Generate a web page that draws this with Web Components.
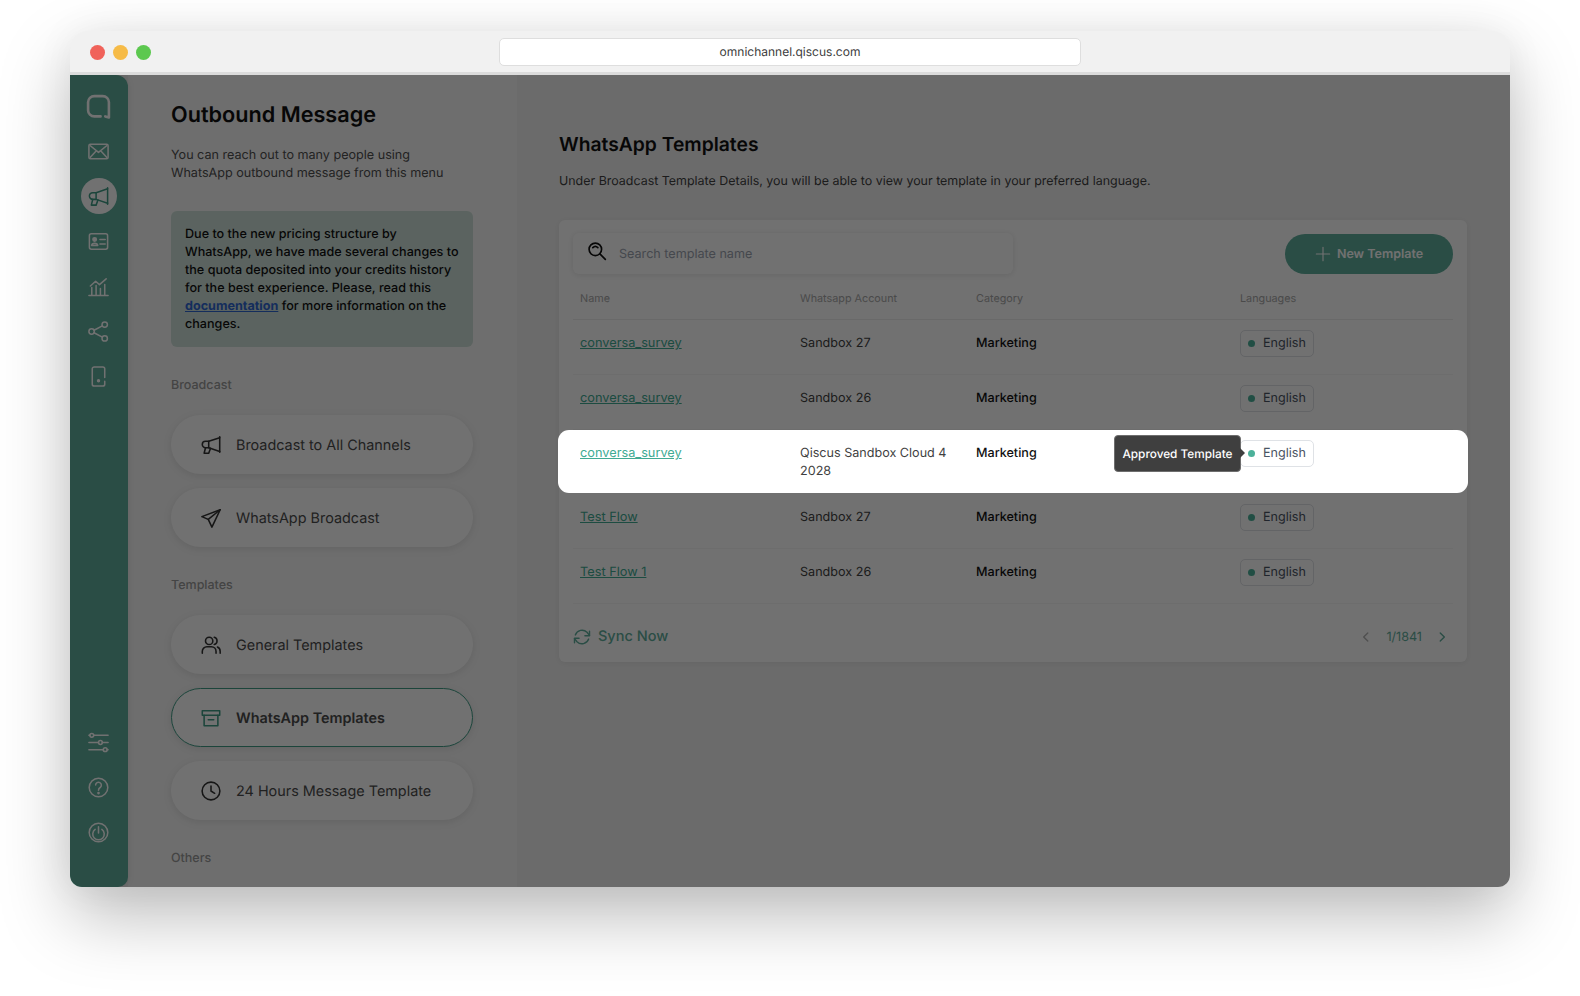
<!DOCTYPE html>
<html>
<head>
<meta charset="utf-8">
<title>Outbound Message</title>
<style>
  html, body { margin: 0; height: 100%; background: #fff; }
  body { font-family: Inter, "Liberation Sans", sans-serif; overflow: hidden; text-rendering: geometricPrecision; }
</style>
</head>
<body>
<app-window>
  <side-rail slot="rail"></side-rail>
  <menu-panel slot="panel"></menu-panel>
  <templates-view slot="main"></templates-view>
</app-window>

<script>
const ICONS = {
  logo: '<path d="M14 21.500H8a6 6 0 0 1-6-6V8a6 6 0 0 1 6-6h8a6 6 0 0 1 6 6v14.500l-3.500-1"/>',
  mail: '<rect x="2" y="4.500" width="20" height="15" rx="1.500"/><path d="M3.500 6l8.500 7 8.500-7M3.500 18l6-6.500M20.500 18l-6-6.500"/>',
  horn: '<path d="M21.500 3v17"/><path d="M21.500 4L9.500 8H6a3.300 3.300 0 0 0 0 7h3.500l12 4"/><path d="M9.500 8v7"/><path d="M6 15l-1.500 6h5l2-5.500"/>',
  card: '<rect x="2.500" y="4" width="19" height="16" rx="2"/><circle cx="8" cy="10" r="1.800" fill="currentColor"/><path d="M4.800 16.200c.4-3 6-3 6.400 0zM13.500 10h5.500M13.500 14.500h5.500"/>',
  chart: '<path d="M2 21.500h20M5 21v-8M9.500 21v-10M14 21v-7M18.500 21v-11M3.500 11.500L9 6.500l4 3.500 7-6"/>',
  share: '<circle cx="4.800" cy="12" r="2.800"/><circle cx="18.500" cy="4.800" r="2.800"/><circle cx="18.500" cy="19.200" r="2.800"/><path d="M7.300 10.700l8.700-4.600M7.300 13.300l8.700 4.600"/>',
  phone: '<path d="M18.500 13V4a2 2 0 0 0-2-2h-9a2 2 0 0 0-2 2v16a2 2 0 0 0 2 2h9a2 2 0 0 0 2-2v-3"/><circle cx="12" cy="16.500" r="1" fill="currentColor"/>',
  sliders: '<path d="M7 4.500h15M2 4.500h1M2 12h10M16 12h6M2 19.500h15M21 19.500h1"/><circle cx="5" cy="4.500" r="2"/><circle cx="14" cy="12" r="2"/><circle cx="19" cy="19.500" r="2"/>',
  help: '<circle cx="12" cy="12" r="9.700"/><path d="M9 9.500a3 3 0 1 1 4.700 2.500c-1.100.7-1.700 1.400-1.700 2.800"/><circle cx="12" cy="17.800" r=".6" fill="currentColor"/>',
  power: '<circle cx="12" cy="12" r="9.700"/><path d="M8.500 8.800a6 6 0 1 0 7 0M12 6v6.500"/>',
  send: '<path d="M22 3L2 10.500l7 3L13 22z"/><path d="M22 3L9 13.500"/>',
  users: '<circle cx="10" cy="7.500" r="4"/><path d="M2.500 21v-2a5 5 0 0 1 5-5h5a5 5 0 0 1 5 5v2"/><path d="M15.500 3.600a4 4 0 0 1 0 7.800M19 14.200a5 5 0 0 1 3 4.800v2"/>',
  box: '<rect x="2.500" y="4" width="19" height="5"/><path d="M4.500 9v11.500h15V9M9 14h6"/>',
  clock: '<circle cx="12" cy="12" r="9.700"/><path d="M12 6.500V12l4 2.500"/>',
  search: '<circle cx="10" cy="10" r="7.500"/><path d="M15.500 15.500L22 22M7 8a4.300 4.300 0 0 1 6 0"/>',
  sync: '<path d="M21 5v5.500h-5.500M3 19v-5.500h5.500"/><path d="M4 9.500a8.500 8.500 0 0 1 14-3.200l3 3.700M3 14l3 3.700a8.500 8.500 0 0 0 14-3.200"/>',
  plus: '<path d="M12 2v20M2 12h20"/>',
  left: '<path d="M15 5l-7 7 7 7"/>',
  right: '<path d="M9 5l7 7-7 7"/>'
};

class UiIcon extends HTMLElement {
  connectedCallback() {
    const size = this.getAttribute('size') || 18;
    const stroke = this.getAttribute('stroke') || 1.8;
    const name = this.getAttribute('name');
    this.attachShadow({ mode: 'open' }).innerHTML = `
      <style>
        :host { display: inline-flex; flex: none; width: ${size}px; height: ${size}px; }
        svg { display: block; width: 100%; height: 100%; fill: none; stroke: currentColor;
              stroke-width: ${stroke}; stroke-linecap: round; stroke-linejoin: round; }
      </style>
      <svg viewBox="0 0 24 24">${ICONS[name]}</svg>`;
  }
}
customElements.define('ui-icon', UiIcon);

class AppWindow extends HTMLElement {
  constructor() {
    super();
    this.attachShadow({ mode: 'open' }).innerHTML = `
      <style>
        :host { display: block; position: absolute; left: 70px; top: 31px; width: 1440px; height: 856px; }
        .win { display: flex; flex-direction: column; width: 100%; height: 100%; background: #f1f1f1;
               border-radius: 18px 18px 12px 12px;
               box-shadow: 0 30px 70px rgba(0,0,0,.26), 0 0 40px rgba(0,0,0,.05); }
        .bar { flex: none; height: 41px; display: flex; align-items: center; padding: 0 20px;
               position: relative; border-bottom: 3px solid #dcdcdc; }
        .dots { display: flex; gap: 8px; padding-top: 2px; }
        .dots i { display: block; width: 15px; height: 15px; border-radius: 50%; }
        .url { position: absolute; left: 429px; top: 7px; width: 582px; height: 28px; box-sizing: border-box;
               background: #fff; border: 1px solid #dedede; border-radius: 5px; padding-bottom: 1px;
               display: flex; align-items: center; justify-content: center;
               font-size: 12px; color: #3c3c3c; }
        .body { flex: 1; min-height: 0; display: flex; position: relative; overflow: hidden;
                background: #f2f2f2; border-radius: 0 0 12px 12px; }
        .shade { position: absolute; inset: 0; background: rgba(0,0,0,.557); z-index: 10; }
      </style>
      <div class="win">
        <div class="bar">
          <div class="dots">
            <i style="background:#f0625a"></i><i style="background:#f6bb47"></i><i style="background:#5cc84f"></i>
          </div>
          <div class="url">omnichannel.qiscus.com</div>
        </div>
        <div class="body">
          <slot name="rail"></slot>
          <slot name="panel"></slot>
          <slot name="main"></slot>
          <div class="shade"></div>
        </div>
      </div>`;
  }
}
customElements.define('app-window', AppWindow);

class SideRail extends HTMLElement {
  constructor() {
    super();
    const top = ['mail', 'horn', 'card', 'chart', 'share', 'phone'];
    const bottom = ['sliders', 'help', 'power'];
    const item = (n) => `<div class="item ${n === 'horn' ? 'on' : ''}"><ui-icon name="${n}" size="${n === 'logo' ? 25 : 23}" stroke="${n === 'logo' ? 2.5 : 1.6}"></ui-icon></div>`;
    this.attachShadow({ mode: 'open' }).innerHTML = `
      <style>
        :host { display: flex; flex: none; width: 58px; position: relative; }
        .rail { flex: 1; display: flex; flex-direction: column; align-items: center; gap: 21px;
                padding: 19px 0 43px; background: #5fae9c; color: #fff;
                border-radius: 0 12px 10px 10px; box-shadow: 1px 0 6px rgba(0,0,0,.08); }
        .item { position: relative; width: 24px; height: 24px; display: flex; align-items: center; justify-content: center; }
        .item.on { color: #3f9c86; }
        .item.on::before { content: ""; position: absolute; left: -6px; top: -6px; width: 36px; height: 36px;
                           border-radius: 50%; background: #fff; }
        .item ui-icon { position: relative; left: -.5px; }
        .gap { flex: 1; }
      </style>
      <div class="rail">
        ${item('logo')}${top.map(item).join('')}
        <div class="gap"></div>
        ${bottom.map(item).join('')}
      </div>`;
  }
}
customElements.define('side-rail', SideRail);

class MenuButton extends HTMLElement {
  constructor() {
    super();
    this.attachShadow({ mode: 'open' }).innerHTML = `
      <style>
        :host { display: flex; align-items: center; gap: 14px; box-sizing: border-box; height: 59px; width: 302px;
                padding-left: 29px; border-radius: 30px; background: #fff; color: #4b4b4b; font-size: 14.400px;
                box-shadow: 0 2px 8px rgba(0,0,0,.1); }
        :host([active]) { border: 1px solid #3f9c86; padding-left: 28px; font-weight: 600; color: #4b4b4b; }
        :host([active]) ui-icon { color: #3f9c86; }
        ui-icon { color: #333; }
        span { padding-top: 1px; }
      </style>
      <ui-icon name="${this.getAttribute('icon')}" size="22" stroke="1.700"></ui-icon>
      <span><slot></slot></span>`;
  }
}
customElements.define('menu-button', MenuButton);

class MenuPanel extends HTMLElement {
  constructor() {
    super();
    this.attachShadow({ mode: 'open' }).innerHTML = `
      <style>
        :host { display: block; flex: none; width: 389px; box-sizing: border-box; padding: 26px 44px 0 43px;
                background: #f8f8f8; overflow: hidden; }
        h1 { margin: 0; font-size: 21.650px; line-height: 28px; font-weight: 600; color: #111; }
        p { margin: 18px 0 0; font-size: 12.600px; line-height: 18px; color: #4f4f4f; }
        .note { margin-top: 28px; padding: 15px 14px 0; height: 136px; box-sizing: border-box; background: #cde0d8;
                border-radius: 6px; font-size: 12.600px; font-weight: 500; line-height: 18px; color: #111; }
        .note a { color: #2f66d0; font-weight: 700; text-decoration: underline; }
        h2 { margin: 30px 0 20px; font-size: 12.500px; line-height: 18px; font-weight: 500; color: #9a9a9a; }
        .list { display: flex; flex-direction: column; gap: 14px; }
      </style>
      <h1>Outbound Message</h1>
      <p>You can reach out to many people using<br>WhatsApp outbound message from this menu</p>
      <div class="note">Due to the new pricing structure by WhatsApp, we have made several changes to the quota deposited into your credits history for the best experience. Please, read this <a>documentation</a> for more information on the changes.</div>
      <h2>Broadcast</h2>
      <div class="list">
        <menu-button icon="horn">Broadcast to All Channels</menu-button>
        <menu-button icon="send">WhatsApp Broadcast</menu-button>
      </div>
      <h2>Templates</h2>
      <div class="list">
        <menu-button icon="users">General Templates</menu-button>
        <menu-button icon="box" active>WhatsApp Templates</menu-button>
        <menu-button icon="clock">24 Hours Message Template</menu-button>
      </div>
      <h2>Others</h2>`;
  }
}
customElements.define('menu-panel', MenuPanel);

class LangBadge extends HTMLElement {
  constructor() {
    super();
    const tip = this.getAttribute('tip');
    this.attachShadow({ mode: 'open' }).innerHTML = `
      <style>
        :host { display: inline-flex; align-items: center; gap: 8px; box-sizing: border-box; position: relative;
                height: 27px; width: 74px; padding-left: 7px; border: 1px solid #dfe2e6; border-radius: 5px;
                background: #fff; font-size: 12.600px; color: #4b5563; }
        i { width: 7px; height: 7px; border-radius: 50%; background: #4cb19a; }
        span { padding-top: 1px; }
        .tip { position: absolute; right: 100%; top: -6px; width: 127px; height: 37px; box-sizing: border-box;
               display: flex; align-items: center; justify-content: center; background: #3f3f3f;
               border: 1px solid #6e6e6e; border-radius: 4px; color: #fff; font-size: 11.800px; font-weight: 500;
               white-space: nowrap; }
        .tip::after { content: ""; position: absolute; left: 100%; top: 12px; border: 5px solid transparent;
                      border-left-color: #3f3f3f; border-right-width: 0; }
      </style>
      ${tip ? `<div class="tip">${tip}</div>` : ''}<i></i><span><slot></slot></span>`;
  }
}
customElements.define('lang-badge', LangBadge);

class TemplateRow extends HTMLElement {
  constructor() {
    super();
    const hi = this.hasAttribute('highlight');
    this.attachShadow({ mode: 'open' }).innerHTML = `
      <style>
        :host { display: grid; grid-template-columns: 220px 176px 264px 1fr; box-sizing: border-box; min-height: 55px;
                padding: 15px 21px 12px; font-size: 12.600px; line-height: 18px; color: #3f3f3f;
                position: relative; }
        :host(:not([highlight]))::after { content: ""; position: absolute; left: 14px; right: 14px; bottom: 0;
                height: 1px; background: #f7f7f7; }
        :host([highlight]) { z-index: 20; background: #fff; border-radius: 11px; margin: 0 -1px 1px; padding: 15px 22px 12px; }
        a { color: #41ab93; text-decoration: underline; font-size: 12.750px; }
        .acc { padding-right: 14px; }
        .cat { color: #111; font-weight: 500; }
        .lang { margin-top: -5px; height: 27px; }
      </style>
      <div><a>${this.getAttribute('name')}</a></div>
      <div class="acc">${this.getAttribute('account')}</div>
      <div class="cat">Marketing</div>
      <div class="lang"><lang-badge ${hi ? 'tip="Approved Template"' : ''}>English</lang-badge></div>`;
  }
}
customElements.define('template-row', TemplateRow);

class TemplatesView extends HTMLElement {
  constructor() {
    super();
    this.attachShadow({ mode: 'open' }).innerHTML = `
      <style>
        :host { display: block; flex: 1; min-width: 0; box-sizing: border-box; padding: 56px 43px 0 42px; }
        h1 { margin: 0; font-size: 19.300px; line-height: 26px; font-weight: 600; color: #111; }
        p { margin: 16px 0 0; font-size: 12.450px; line-height: 18px; color: #3f3f3f; }
        .card { margin-top: 29px; background: #fff; border-radius: 6px; box-shadow: 0 1px 6px rgba(0,0,0,.07); }
        .tools { display: flex; justify-content: space-between; align-items: center; padding: 13px 14px 0; }
        .search { display: flex; align-items: center; gap: 12px; box-sizing: border-box; width: 440px; height: 41px;
                  padding-left: 14px; border-radius: 6px; background: #fff; box-shadow: 0 1px 6px rgba(0,0,0,.1);
                  font-size: 12.600px; color: #9ca3af; }
        .search ui-icon { color: #111; margin-top: -6px; }
        .search span { margin-top: 2px; }
        .new { display: flex; align-items: center; justify-content: center; gap: 6px; width: 168px; height: 40px;
               border-radius: 20px; background: #5fae9c; color: #fff; font-size: 12.500px; font-weight: 600; }
        .new span { padding-top: 1px; }
        .head { display: grid; grid-template-columns: 220px 176px 264px 1fr; padding: 17px 21px 13px; margin: 0;
                font-size: 10.800px; line-height: 16px; color: #a8a8a8; position: relative; }
        .head::after { content: ""; position: absolute; left: 14px; right: 14px; bottom: 0; height: 1px; background: #ececec; }
        .foot { display: flex; justify-content: space-between; align-items: center; padding: 23px 14px 15px; }
        .sync { display: flex; align-items: center; gap: 6px; margin-left: -1px; font-size: 14.500px; font-weight: 500; line-height: 18px; color: #5fae9c; }
        .pages { display: flex; align-items: center; gap: 13px; font-size: 12.600px; color: #5fae9c; padding-right: 4px; }
        .pages .off { color: #b5b5b5; }
        .rows { display: block; }
      </style>
      <h1>WhatsApp Templates</h1>
      <p>Under Broadcast Template Details, you will be able to view your template in your preferred language.</p>
      <div class="card">
        <div class="tools">
          <div class="search"><ui-icon name="search" size="20" stroke="2"></ui-icon><span>Search template name</span></div>
          <div class="new"><ui-icon name="plus" size="16" stroke="1.700"></ui-icon><span>New Template</span></div>
        </div>
        <div class="head"><span>Name</span><span>Whatsapp Account</span><span>Category</span><span>Languages</span></div>
        <div class="rows">
          <template-row name="conversa_survey" account="Sandbox 27"></template-row>
          <template-row name="conversa_survey" account="Sandbox 26"></template-row>
          <template-row name="conversa_survey" account="Qiscus Sandbox Cloud 4 2028" highlight></template-row>
          <template-row name="Test Flow" account="Sandbox 27"></template-row>
          <template-row name="Test Flow 1" account="Sandbox 26"></template-row>
        </div>
        <div class="foot">
          <div class="sync"><ui-icon name="sync" size="20" stroke="1.700"></ui-icon>Sync Now</div>
          <div class="pages"><ui-icon class="off" name="left" size="14" stroke="2.400"></ui-icon><span>1/1841</span><ui-icon name="right" size="14" stroke="2.400"></ui-icon></div>
        </div>
      </div>`;
  }
}
customElements.define('templates-view', TemplatesView);
</script>
</body>
</html>
